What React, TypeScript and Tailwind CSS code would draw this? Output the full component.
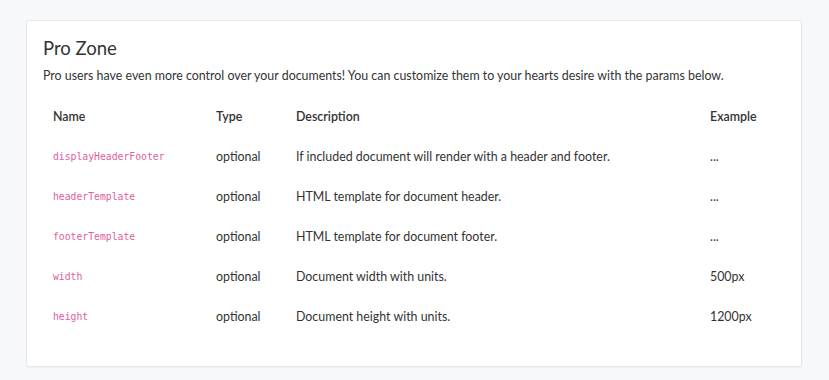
import React from "react";

const rows = [
  { name: "displayHeaderFooter", type: "optional", desc: "If included document will render with a header and footer.", ex: "..." },
  { name: "headerTemplate", type: "optional", desc: "HTML template for document header.", ex: "..." },
  { name: "footerTemplate", type: "optional", desc: "HTML template for document footer.", ex: "..." },
  { name: "width", type: "optional", desc: "Document width with units.", ex: "500px" },
  { name: "height", type: "optional", desc: "Document height with units.", ex: "1200px" },
];

export default function App() {
  return (
    <div className="w-[829px] h-[380px] bg-[#f7f8fa] pt-[20px] pl-[26px] text-[#333] [font-family:Lato,sans-serif]">
      <div className="w-[776px] h-[347px] bg-white border border-[#e6e8eb] rounded-[3px] shadow-[0_1px_2px_rgba(0,0,0,0.04)] px-[16px] pt-[14px]">
        <h2 className="text-[18.5px] leading-[26px] font-normal text-[#333]">Pro Zone</h2>
        <p className="text-[12.4px] leading-[18px] mt-[6px] text-[#333]">
          Pro users have even more control over your documents! You can customize them to your hearts desire with the params below.
        </p>
        <div className="mt-[12px] grid grid-cols-[163px_80px_414px_1fr] pl-[10px]">
          <div className="h-[40px] flex items-center text-[12.4px] font-semibold">Name</div>
          <div className="h-[40px] flex items-center text-[12.4px] font-semibold">Type</div>
          <div className="h-[40px] flex items-center text-[12.4px] font-semibold">Description</div>
          <div className="h-[40px] flex items-center text-[12.4px] font-semibold">Example</div>
          {rows.map((r) => (
            <React.Fragment key={r.name}>
              <div className="h-[40px] flex items-center text-[9.75px] text-[#e0619a] [font-family:'DejaVu_Sans_Mono',monospace]">{r.name}</div>
              <div className="h-[40px] flex items-center text-[12.4px]">{r.type}</div>
              <div className="h-[40px] flex items-center text-[12.4px]">{r.desc}</div>
              <div className="h-[40px] flex items-center text-[12.4px]">{r.ex}</div>
            </React.Fragment>
          ))}
        </div>
      </div>
    </div>
  );
}
